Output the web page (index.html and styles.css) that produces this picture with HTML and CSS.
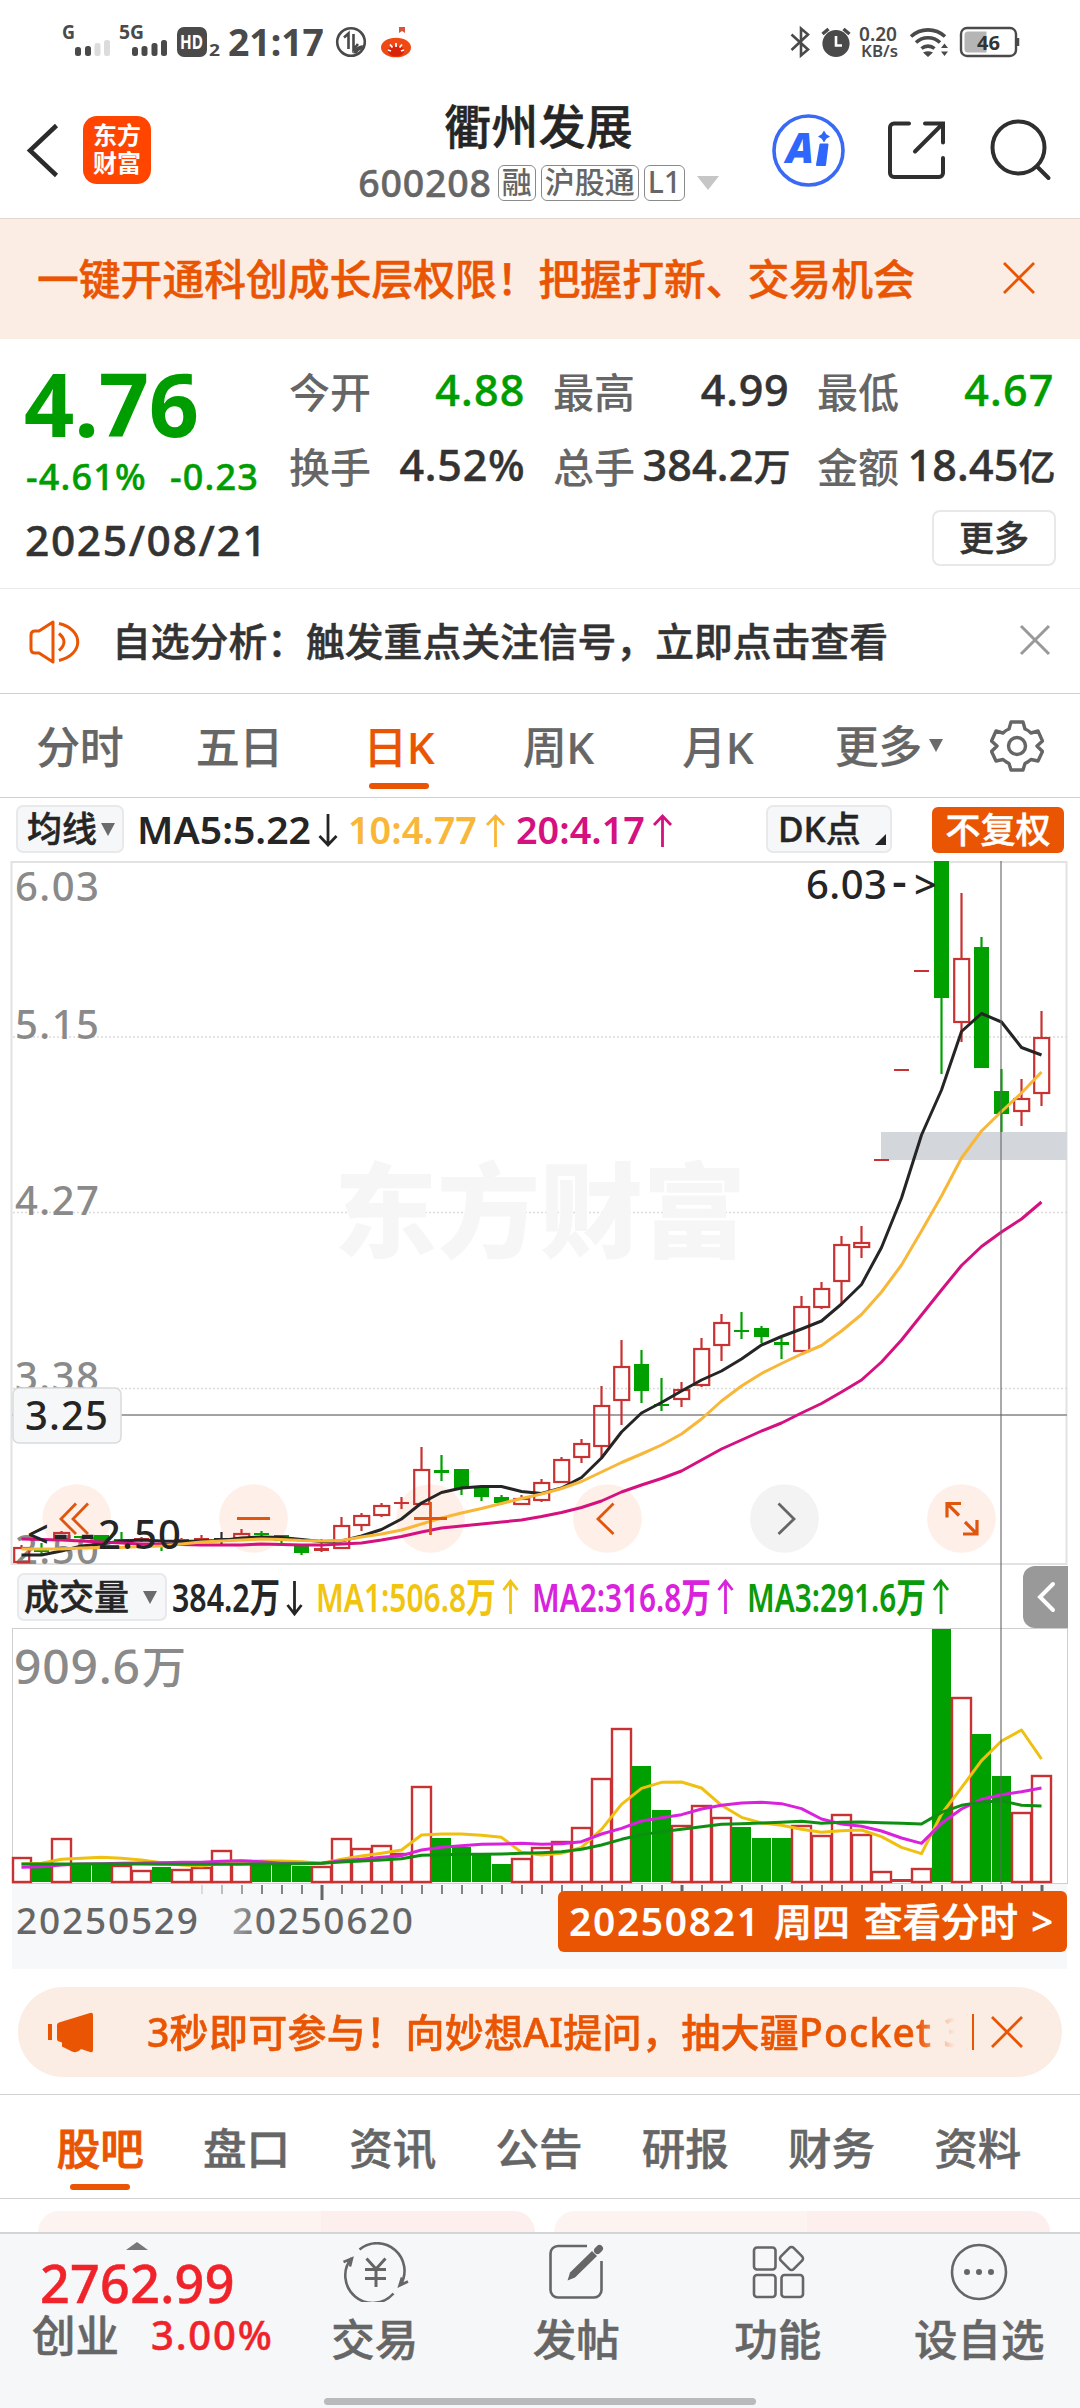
FILE: index.html
```html
<!DOCTYPE html>
<html lang="zh-CN">
<head>
<meta charset="utf-8">
<title>衢州发展 600208</title>
<link rel="stylesheet" href="styles.css">
</head>
<body>
<div class="phone">

  <div class="status">
    <svg class="status-left" width="380" height="40" viewBox="50 20 380 40">
      <g fill="#4a4a4a" class="st-text">
        <text x="62" y="39" font-size="20" textLength="13" lengthAdjust="spacingAndGlyphs">G</text>
        <rect x="75" y="47" width="6" height="9" rx="2.5"/><rect x="85" y="46" width="6" height="10" rx="2.5"/>
        <rect x="94.500" y="43" width="6" height="13" rx="2.500" fill="#dcdcdc"/><rect x="104" y="40" width="6" height="16" rx="2.500" fill="#dcdcdc"/>
        <text x="119" y="39" font-size="20" textLength="25" lengthAdjust="spacingAndGlyphs">5G</text>
        <rect x="132" y="47" width="6" height="9" rx="2.500"/><rect x="141.500" y="46" width="6" height="10" rx="2.500"/>
        <rect x="151.500" y="43" width="6" height="13" rx="2.500"/><rect x="161" y="40" width="6" height="16" rx="2.500"/>
        <rect x="177" y="27" width="30" height="30" rx="7"/>
        <text x="180" y="49" font-size="20" fill="#fff" textLength="23" lengthAdjust="spacingAndGlyphs">HD</text>
        <text x="209" y="56" font-size="16" textLength="11" lengthAdjust="spacingAndGlyphs">2</text>
        <text x="228" y="56" font-size="38" textLength="96" lengthAdjust="spacingAndGlyphs">21:17</text>
      </g>
      <g fill="none" stroke="#4a4a4a" stroke-width="2.600">
        <circle cx="351" cy="42" r="13.800"/>
        <path d="M344 37.500l4.500-4V49M353.500 34v15.500l4.500-5.500"/>
        <path d="M355 53.500c.5-4 3.500-5.500 8-6.500" stroke-width="4"/>
      </g>
      <path d="M399 27h6v6l-3-2-3 2z" fill="#d4573a"/>
      <ellipse cx="396" cy="47.500" rx="15" ry="9.800" fill="#f04a14"/>
      <ellipse cx="396" cy="51" rx="8" ry="5.500" fill="#d9230a"/>
      <path d="M388 50l3 1M390 44.500l2.500 3M396 43v4M402 44.500l-2.500 3M404 50l-3 1" stroke="#fff" stroke-width="1.800"/>
    </svg>
    <svg class="status-right" width="250" height="40" viewBox="780 20 250 40">
      <path d="M791.500 34.500L808 49.500l-7 6V28.500l7 6L791.500 50" fill="none" stroke="#4a4a4a" stroke-width="2.600"/>
      <circle cx="836" cy="43.500" r="13.600" fill="#4a4a4a"/>
      <path d="M822.500 34l6-5M849.500 34l-6-5" stroke="#4a4a4a" stroke-width="3.400"/>
      <path d="M836 36v9.500h6" fill="none" stroke="#fff" stroke-width="2.600"/>
      <g class="st-text thin" fill="#4a4a4a">
        <text x="859" y="41" font-size="19" textLength="38" lengthAdjust="spacingAndGlyphs">0.20</text>
        <text x="861" y="57" font-size="16" textLength="37" lengthAdjust="spacingAndGlyphs">KB/s</text>
      </g>
      <g fill="none" stroke="#4a4a4a" stroke-width="3.600">
        <path d="M911 36.500a25 25 0 0 1 34 0M916 42.500a17.500 17.500 0 0 1 24 0M921.500 48.500a10 10 0 0 1 13 0"/>
      </g>
      <path d="M923 52.500q5-2.500 10 0l-5 4.500zM941 48l3.500-4.500 3.500 4.500zM941 51.500h7l-3.500 4.500z" fill="#4a4a4a"/>
      <rect x="961" y="28" width="55" height="28" rx="6" fill="none" stroke="#4a4a4a" stroke-width="2.400"/>
      <path d="M968 31.500h18.500v21H968q-3.500 0-3.500-3.500V35q0-3.500 3.500-3.500z" fill="#b5b5b5"/>
      <path d="M1018 38v8" stroke="#4a4a4a" stroke-width="2.500"/>
      <text x="977" y="49.500" font-size="20" class="st-text" fill="#333" textLength="23" lengthAdjust="spacingAndGlyphs">46</text>
    </svg>
  </div>

  <header class="header">
    <svg class="back" width="40" height="60" viewBox="20 121 40 60"><path d="M56.500 126.500L30 151.500l26.500 25" fill="none" stroke="#2b2b2b" stroke-width="4.500"/></svg>
    <div class="logo"><span>东方</span><span>财富</span></div>
    <div class="title-block">
      <h1>衢州发展</h1>
      <div class="code"><span class="num">600208</span><i>融</i><i>沪股通</i><i>L1</i><b class="tri"></b></div>
    </div>
    <svg class="head-icons" width="290" height="80" viewBox="765 111 290 80">
      <circle cx="808.500" cy="151.500" r="34.500" fill="none" stroke="#3a6af5" stroke-width="3.600"/>
      <text class="ai" x="786" y="164" font-size="43" fill="#2f66fb" textLength="28" lengthAdjust="spacingAndGlyphs">A</text>
      <path d="M820.500 145.500h7l-2.500 20.500h-8z" fill="#2f66fb" stroke="#2f66fb" stroke-width="2" stroke-linejoin="round"/>
      <path d="M824 131.500l2.300 3.700 3.700 2.300-3.700 2.300-2.300 3.700-2.300-3.700-3.700-2.300 3.700-2.300z" fill="#2f66fb"/>
      <g fill="none" stroke="#2f2f2f" stroke-width="4" stroke-linecap="round">
        <path d="M909 124.500h-15a4 4 0 0 0-4 4V174a4 4 0 0 0 4 4h45a4 4 0 0 0 4-4v-15M925 124.500h18v19M942 125.500L915 152.500"/>
        <circle cx="1018.500" cy="148.500" r="26"/><path d="M1037 167.500l11.500 11.500"/>
      </g>
    </svg>
  </header>

  <div class="banner"><span>一键开通科创成长层权限！把握打新、交易机会</span>
    <svg width="34" height="34" viewBox="0 0 34 34"><path d="M2 2l30 30M32 2L2 32" stroke="#ea5504" stroke-width="2.800"/></svg>
  </div>

  <section class="quote">
    <div class="price-col">
      <div class="last">4.76</div>
      <div class="chg"><span>-4.61%</span><span>-0.23</span></div>
    </div>
    <div class="stats">
      <div><label>今开</label><span class="g">4.88</span></div>
      <div><label>最高</label><span>4.99</span></div>
      <div><label>最低</label><span class="g">4.67</span></div>
      <div><label>换手</label><span>4.52%</span></div>
      <div><label>总手</label><span>384.2<em>万</em></span></div>
      <div><label>金额</label><span>18.45<em>亿</em></span></div>
    </div>
    <div class="date-row"><span class="date">2025/08/21</span><button class="more">更多</button></div>
  </section>

  <div class="notice">
    <svg width="54" height="48" viewBox="28 616 54 48" fill="none" stroke="#ea5504" stroke-width="3">
      <path d="M53 621v40l-14-9h-4q-4 0-4-4v-14q0-4 4-4h4z" stroke-linejoin="round"/><path d="M59 632.500q10 8.500 0 17M59 622.500c25 6 25 31 0 37"/></svg>
    <span>自选分析：触发重点关注信号，立即点击查看</span>
    <svg class="nx" width="32" height="32" viewBox="0 0 32 32"><path d="M2 2l28 28M30 2L2 30" stroke="#999" stroke-width="3"/></svg>
  </div>

  <nav class="periods">
    <span>分时</span><span>五日</span><span class="on">日K</span><span>周K</span><span>月K</span>
    <span class="wide">更多<b class="tri"></b></span>
    <svg width="54" height="54" viewBox="-27 -27 54 54" fill="none" stroke="#666" stroke-width="3.400" stroke-linejoin="round">
      <path d="M-6-24H6L8-17Q11-16 14-13L21-15 25.500-5 20 0 25.500 5.500 21 15 14 13.500Q11 16 8 17.500L6 24H-6L-8 17.500Q-11 16-14 13.500L-21 15-25.500 5.500-20 0-25.500-5-21-15-14-13Q-11-16-8-17z"/><circle r="8.500"/></svg>
  </nav>

  <div class="ma-row">
    <button class="pill avg">均线<b class="tri"></b></button>
    <svg width="600" height="50" viewBox="130 806 600 50" class="legend">
      <text x="137" y="844" font-size="37" fill="#252525" textLength="174" lengthAdjust="spacingAndGlyphs">MA5:5.22</text>
      <text x="348" y="844" font-size="37" fill="#f8b739" textLength="129" lengthAdjust="spacingAndGlyphs">10:4.77</text>
      <text x="516" y="844" font-size="37" fill="#d4117f" textLength="129" lengthAdjust="spacingAndGlyphs">20:4.17</text>
      <g fill="none" stroke-width="2.800"><path stroke="#252525" d="M328 814v31M319.500 836l8.500 9 8.500-9"/>
      <path stroke="#f8b739" d="M495.500 847v-31M487 825l8.500-9 8.500 9"/><path stroke="#d4117f" d="M662.500 847v-31M654 825l8.500-9 8.500 9"/></g>
    </svg>
    <button class="pill dk">DK点<b class="corner"></b></button>
    <button class="adj">不复权</button>
  </div>

  <section class="charts">
    <svg id="price" class="chart-svg" width="1080" height="704" viewBox="0 861 1080 704"></svg>
    <div class="vol-row">
      <button class="pill vol">成交量<b class="tri"></b></button>
      <svg width="800" height="50" viewBox="167 1572 800 50" class="legend">
        <text x="172" y="1612" font-size="40" fill="#252525" textLength="108" lengthAdjust="spacingAndGlyphs">384.2万</text>
        <text x="316" y="1612" font-size="40" fill="#f1c40f" textLength="180" lengthAdjust="spacingAndGlyphs">MA1:506.8万</text>
        <text x="532" y="1612" font-size="40" fill="#d822dc" textLength="179" lengthAdjust="spacingAndGlyphs">MA2:316.8万</text>
        <text x="747" y="1612" font-size="40" fill="#0a9a0a" textLength="179" lengthAdjust="spacingAndGlyphs">MA3:291.6万</text>
        <g fill="none" stroke-width="2.800"><path stroke="#252525" d="M294.500 1581v33M287.500 1605l7 9 7-9"/>
        <path stroke="#f1c40f" d="M510.500 1614v-33M503.500 1590l7-9 7 9"/><path stroke="#d822dc" d="M725.500 1614v-33M718.500 1590l7-9 7 9"/><path stroke="#0a9a0a" d="M941 1614v-33M934 1590l7-9 7 9"/></g>
      </svg>
      <div class="fold"><svg width="20" height="32" viewBox="0 0 20 32"><path d="M17 3L4 16l13 13" fill="none" stroke="#fff" stroke-width="4" stroke-linecap="round"/></svg></div>
    </div>
    <svg id="volume" class="chart-svg" width="1080" height="256" viewBox="0 1628 1080 256"></svg>
    <div class="axis">
      <svg id="ticks" class="chart-svg" width="1055" height="85" viewBox="12 1884 1055 85"></svg>
      <button class="minute">
        <svg width="509" height="61" viewBox="558 1891 509 61" class="legend">
          <text x="569" y="1936" font-size="39" fill="#fff" textLength="190">20250821</text>
          <text x="774" y="1936" font-size="38" fill="#fff" textLength="76" class="cjk">周四</text>
          <text x="864" y="1936" font-size="38.500" fill="#fff" textLength="154" class="cjk">查看分时</text>
          <text x="1031" y="1936" font-size="39" fill="#fff">&gt;</text>
        </svg>
      </button>
    </div>
    <div class="cross-v"></div>
  </section>

  <div class="promo">
    <svg width="46" height="42" viewBox="47 2011 46 42" fill="#ea5504"><path d="M48 2024h4v16h-4zM57 2025q0-2 2-2.500l31-9.500q3-1 3 2v35q0 3-3 2l-9-3q-4 5-9 2.500l-10-5v-4l-3-1q-2-.5-2-2.500z"/></svg>
    <div class="promo-text">3秒即可参与！向妙想AI提问，抽大疆<b>Pocket 3</b></div>
    <i></i>
    <svg width="34" height="34" viewBox="0 0 34 34"><path d="M2 2l30 30M32 2L2 32" stroke="#ea5504" stroke-width="2.800"/></svg>
  </div>

  <nav class="subtabs">
    <span class="on">股吧</span><span>盘口</span><span>资讯</span><span>公告</span><span>研报</span><span>财务</span><span>资料</span>
  </nav>

  <div class="cards"><div></div><div></div></div>

  <footer class="bottom">
    <div class="index">
      <b class="up"></b>
      <div class="idx">2762.99</div>
      <div class="idx-row"><span>创业</span><span class="r">3.00%</span></div>
    </div>
    <div class="item">
      <svg width="70" height="60" viewBox="340 2242 70 60" fill="none" stroke="#666" stroke-width="2.600"><path d="M359.500 2249.500a27.500 27.500 0 0 1 41 35.500M393.500 2293.500a27.500 27.500 0 0 1-42-35.500M343.500 2262l8.500-3.500-2 8M408 2281.500l-8.500 4 2.500-8"/><path d="M366.500 2258.500l9.500 10.500 9.500-10.500M365 2269.500h21M365 2278.500h21M376 2269v18" stroke-width="3"/></svg>
      <span>交易</span></div>
    <div class="item">
      <svg width="60" height="60" viewBox="547 2242 60 60" fill="none" stroke="#666" stroke-width="2.600"><path d="M588 2246h-29a7.500 7.500 0 0 0-7.500 7.500V2290a7.500 7.500 0 0 0 7.500 7.500h36a7.500 7.500 0 0 0 7.500-7.500v-29"/><path d="M568.500 2280.500l2.500-8 22-21.500 5 5-22 21.500z" fill="#666" stroke="none"/><path d="M598.500 2250.500l2-2" stroke-width="7" stroke-linecap="round"/></svg>
      <span>发帖</span></div>
    <div class="item">
      <svg width="60" height="60" viewBox="748 2242 60 60" fill="none" stroke="#666" stroke-width="2.600"><rect x="754" y="2247.500" width="21.500" height="22" rx="3"/><rect x="754" y="2275" width="21.500" height="22" rx="3"/><rect x="781.500" y="2275" width="21.500" height="22" rx="3"/><rect x="782.500" y="2249.500" width="18" height="18" rx="3" transform="rotate(45 791.500 2258.500)"/></svg>
      <span>功能</span></div>
    <div class="item">
      <svg width="60" height="60" viewBox="949 2242 60 60" fill="none" stroke="#666" stroke-width="2.600"><circle cx="979" cy="2272" r="27"/><g fill="#666" stroke="none"><circle cx="967" cy="2272" r="3"/><circle cx="979" cy="2272" r="3"/><circle cx="991" cy="2272" r="3"/></g></svg>
      <span>设自选</span></div>
    <div class="home"></div>
  </footer>
</div>
<script src="chart.js"></script>
</body>
</html>
```
FILE: styles.css
```css
* { box-sizing: border-box; }
body { margin: 0; background: #fff; font-family: "Noto Sans", "Noto Sans CJK SC", sans-serif; font-weight: 500; color: #252525; -webkit-text-stroke: .5px; }
svg { display: block; flex: none; }
svg text { -webkit-text-stroke: 0; }
button { font: inherit; border: 0; padding: 0; color: inherit; }
i, em { font-style: normal; }
h1 { margin: 0; font-weight: 500; }
.phone { width: 1080px; height: 2408px; overflow: hidden; display: flex; flex-direction: column; }
.phone > * { flex: none; }
.tri { display: block; width: 0; height: 0; border: 7px solid transparent; border-bottom: 0; border-top: 13px solid #6b6b6b; }

.status { height: 82px; padding: 20px 50px 0; display: flex; justify-content: space-between; }
.st-text { font-family: "Noto Sans", sans-serif; font-weight: 700; }
.thin { font-weight: 600; }

.header { height: 137px; border-bottom: 1px solid #e3d6cf; display: flex; align-items: center; padding: 0 25px 0 20px; }
.logo { width: 68px; height: 68px; margin-left: 23px; border-radius: 14px; background: #ff4500; color: #fff; font-size: 24px; line-height: 28px; font-weight: 700; text-align: center; padding-top: 5px; -webkit-text-stroke: 0; }
.logo span { display: block; }
.title-block { flex: 1; display: flex; flex-direction: column; align-items: center; padding-left: 161px; margin-top: 2px; }
h1 { font-size: 47px; line-height: 56px; letter-spacing: .2px; margin-top: -2px; }
.code { display: flex; align-items: center; color: #666; height: 38px; margin-top: 10px; }
.code .num { font-size: 37.500px; letter-spacing: .8px; line-height: 36px; margin-right: 6px; }
.code i { border: 1px solid #8a8a8a; border-radius: 6px; font-size: 30px; height: 36px; line-height: 32px; padding: 0 3px; margin-right: 5px; -webkit-text-stroke: 0; }
.code .tri { border-width: 14px 11px 0; border-top-color: #c6c6c6; margin-left: 7px; }
.ai { font-family: "Noto Sans", sans-serif; font-weight: 900; font-style: italic; }

.banner { height: 120px; background: #fbede4; color: #ea5504; font-size: 41.800px; display: flex; align-items: center; justify-content: space-between; padding: 0 44px 0 37px; }
.banner svg { margin-top: -2px; }
.banner span { line-height: 60px; }

.quote { height: 250px; border-bottom: 1px solid #e9e9e9; padding: 20px 24px 0 25px; display: grid; grid-template-columns: 264px 1fr; grid-template-rows: 148px 62px; color: #333; }
.last { font-size: 88px; line-height: 90px; font-weight: 700; color: #009d00; letter-spacing: -.2px; margin-left: -1px; margin-top: -1px; -webkit-text-stroke: 0; }
.chg { color: #009d00; font-size: 36px; line-height: 44px; display: flex; gap: 23px; margin-top: 7px; white-space: nowrap; letter-spacing: 1.200px; margin-left: 1px; }
.stats { display: grid; grid-template-columns: 236px 236px 237px; column-gap: 28px; grid-template-rows: 75px 75px; margin-top: -7px; }
.stats div { display: flex; justify-content: space-between; align-items: center; white-space: nowrap; }
.stats label { font-size: 41px; color: #666; -webkit-text-stroke: 0; }
.stats span { font-size: 43px; letter-spacing: .8px; margin-right: -.5px; }
.stats .g { color: #009d00; letter-spacing: 1.200px; }
.stats em { font-size: 37px; letter-spacing: -1px; }
.stats div:nth-child(n+5) span { letter-spacing: .2px; }
.date-row { grid-column: 1 / 3; display: flex; justify-content: space-between; align-items: center; }
.date { font-size: 42.500px; letter-spacing: 1.600px; margin-top: 2px; }
.more { width: 124px; height: 56px; border: 2px solid #e8e8e8; border-radius: 8px; background: #fff; font-size: 35px; line-height: 50px; }

.notice { height: 105px; border-bottom: 1px solid #d2d2d2; padding: 0 29px 0 28px; display: flex; align-items: center; font-size: 38.800px; color: #333; }
.notice span { margin-left: 30px; flex: 1; white-space: nowrap; margin-top: -4px; }
.nx { margin-top: -2px; }

.periods { height: 104px; border-bottom: 1px solid #d2d2d2; display: flex; padding-right: 36px; color: #666; font-size: 44px; align-items: center; }
.periods span { width: 159.500px; height: 103px; text-align: center; line-height: 106px; display: flex; justify-content: center; position: relative; -webkit-text-stroke: .2px; letter-spacing: -.4px; }
.periods .wide { align-items: center; gap: 7px; flex: 1; padding-right: 10px; }
.on { color: #ea5504; }
.on::after { content: ""; position: absolute; left: 50%; bottom: 8px; width: 60px; height: 6px; border-radius: 3px; margin-left: -30px; background: #ea5504; }

.pill { background: #f6f7f9; border: 2px solid #e8e9eb; border-radius: 7px; height: 48px; display: flex; align-items: center; font-size: 35px; line-height: 42px; position: relative; }
.ma-row { height: 63px; padding: 7px 16px 0; display: flex; }
.avg { width: 108px; padding-left: 9px; gap: 4px; }
.ma-row .legend { margin-left: 6px; margin-top: 1px; }
.dk { width: 126px; padding-left: 10px; margin-left: 36px; }
.corner { position: absolute; right: 4px; bottom: 6px; border-left: 11px solid transparent; border-bottom: 11px solid #252525; }
.adj { width: 132px; height: 46px; margin-left: auto; margin-top: 2px; border-radius: 6px; background: #ea5504; color: #fff; font-size: 35px; line-height: 44px; }

.charts { position: relative; }
.chart-svg text, .legend text { font-family: "Noto Sans", "Noto Sans CJK SC", sans-serif; font-weight: 600; }
.chart-svg text { font-weight: 550; }
.legend .cjk { font-weight: 500; stroke: #fff; stroke-width: .6px; }
.vol-row { height: 63px; padding: 8px 12px 0 17px; display: flex; }
.vol { width: 150px; padding-left: 5px; gap: 14px; }
.vol-row .legend { margin-top: -1px; }
.fold { width: 45px; height: 62px; margin: -7px 0 0 auto; background: #999; border-radius: 12px 0 0 12px; display: flex; align-items: center; justify-content: center; }
.axis { height: 85px; margin: 0 13px 0 12px; background: #f7f8fa; position: relative; }
.minute { position: absolute; right: 0; top: 7px; width: 509px; height: 61px; border-radius: 6px; background: #ea5504; }
.cross-v { position: absolute; left: 1000px; top: 0; width: 2px; height: 1023px; background: rgba(100, 100, 100, .55); }

.promo { height: 90px; margin: 18px 18px 17px; border-radius: 45px; background: #fbede4; color: #ea5504; display: flex; align-items: center; padding: 0 38px 0 29px; font-size: 39px; }
.promo-text { width: 812px; margin-left: 54px; margin-top: -4px; overflow: hidden; white-space: nowrap; letter-spacing: .3px; -webkit-mask-image: linear-gradient(90deg, #000 95%, transparent 99.5%); mask-image: linear-gradient(90deg, #000 95%, transparent 99.5%); }
.promo-text b { font-weight: inherit; letter-spacing: 1.200px; }
.promo i { width: 2px; height: 36px; background: #ea5504; margin: 0 16px 0 13px; }

.subtabs { height: 105px; border-top: 1px solid #d2d2d2; border-bottom: 1px solid #d2d2d2; padding: 0 29px 0 27px; display: flex; font-size: 43.500px; color: #666; }
.subtabs span { flex: 1; text-align: center; line-height: 106px; position: relative; }
.subtabs .on { color: #ea5504; -webkit-text-stroke: .9px; }

.cards { height: 33px; padding: 12px 30px 0 38px; display: flex; gap: 19px; overflow: hidden; }
.cards div { flex: 1; border-radius: 22px 22px 0 0; background: linear-gradient(90deg, #fdf4f2 57%, #fcefed 57%); }
.cards div + div { background: linear-gradient(90deg, #fdf4f2 51%, #fcefed 51%); }

.bottom { height: 176px; border-top: 2px solid #d4d5d7; background: #f6f7f9; display: grid; grid-template-columns: 274px repeat(4, 201.500px); position: relative; color: #666; font-size: 43.500px; }
.index { padding: 8px 0 0 32px; }
.up { display: block; width: 0; height: 0; border: 11px solid transparent; border-top: 0; border-bottom: 8px solid #777; margin-left: 94px; }
.idx { color: #f0232b; font-size: 52px; line-height: 60px; margin: 3px 0 0 8px; letter-spacing: .3px; }
.idx-row { display: flex; align-items: center; line-height: 50px; gap: 32px; margin-top: -3px; white-space: nowrap; }
.r { color: #f0232b; font-size: 40px; letter-spacing: 1.800px; }
.item { display: flex; flex-direction: column; align-items: center; padding-top: 8px; }
.item span { line-height: 60px; margin-top: 7px; }
.home { position: absolute; left: 324px; bottom: 3px; width: 432px; height: 7px; border-radius: 4px; background: #b9babc; }
```
FILE: chart.js
```js
const RED = '#c83232', GREEN = '#00a000';
const X0 = 21.5, STEP = 20;
const cx = i => X0 + STEP * i;

// [kind, bodyTop, bodyBottom, wickTop, wickBottom]
const candles = [
  ['r',1547,1563,1545,1563],['g',1550,1552,1543,1554],['r',1532,1540,1531,1541],['g',1536,1538,1536,1538],
  ['g',1535,1542,1535,1542],['g',1539,1541,1532,1542],['r',1538,1540,1537,1542],['g',1544,1546,1544,1551],
  ['r',1539,1542,1538,1543],['r',1538,1541,1535,1543],['k',1538,1540,1532,1544],['r',1533,1539,1529,1539],
  ['g',1533,1535,1531,1537],['g',1535,1541,1535,1546],['g',1545,1553,1545,1555],['r',1548,1551,1539,1552],
  ['r',1525,1549,1517,1549],['r',1515,1526,1513,1531],['r',1505,1516,1503,1517],['r',1502,1504,1497,1509],
  ['r',1469,1505,1447,1505],['g',1470,1473,1455,1481],['g',1469,1488,1469,1495],['g',1487,1497,1487,1501],
  ['g',1497,1503,1495,1505],['r',1498,1505,1495,1505],['r',1482,1501,1479,1502],['r',1459,1483,1457,1483],
  ['r',1443,1458,1439,1463],['r',1405,1447,1386,1457],['r',1366,1401,1340,1425],['g',1364,1391,1350,1403],
  ['g',1404,1406,1378,1411],['r',1389,1400,1382,1407],['r',1348,1386,1338,1387],['r',1322,1346,1314,1361],
  ['g',1330,1332,1312,1339],['g',1328,1337,1326,1343],['g',1342,1345,1338,1359],['r',1306,1352,1296,1352],
  ['r',1288,1308,1282,1309],['r',1244,1282,1236,1303],['r',1242,1248,1226,1258],['r',1159,1161,1159,1161],
  ['r',1069,1071,1069,1071],['r',970,972,970,972],['g',861,998,861,1074],['r',958,1023,893,1042],
  ['g',947,1068,937,1068],['g',1091,1114,1069,1132],['r',1098,1112,1079,1126],['r',1037,1094,1011,1106]
];
const ma5 = [1555,1555,1551,1546,1544,1541,1540,1541,1541.5,1541,1540.5,1538,1537,1537.5,1539.5,1541.5,1541,1536,1529.5,1519,1503,1492.5,1488,1486.5,1486.5,1491.5,1493.5,1488,1477.5,1458,1432,1413,1402.5,1391,1380,1371,1359,1345,1336.5,1329,1321,1304,1284.5,1247.5,1198,1135,1090,1031.5,1013.5,1022,1047.5,1055];
const ma10 = [1549,1549,1549,1548,1547.5,1547.5,1546.5,1546,1544,1542,1541,1540,1539,1539.5,1540.5,1541,1540.5,1537,1534,1530,1524,1518,1513,1508.5,1503.5,1498.5,1494,1488.5,1481.5,1472,1462.5,1454,1445,1434,1419,1401,1386,1373.5,1363.5,1354,1345.5,1331,1314.5,1292,1265,1231,1196,1158,1131,1111.5,1093,1072];
const ma20 = [1539,1539.5,1540,1541,1542,1543,1544,1544,1544.5,1545,1545,1545,1544,1544.5,1545,1545,1544,1543,1540,1536.5,1532,1528,1526,1524,1522,1520,1516.5,1512.5,1507.5,1501,1492,1485,1478.5,1471,1460,1449,1440,1431,1423,1413,1403.5,1392,1380,1362,1340,1315,1290,1265.5,1246.5,1232,1219,1202];

const el = [];
const line = (x1, y1, x2, y2, s, w = 2.2, extra = '') =>
  `<path d="M${x1} ${y1}L${x2} ${y2}" stroke="${s}" stroke-width="${w}" ${extra}/>`;
const poly = (ys, s, w = 3) =>
  `<polyline points="${ys.map((y, i) => cx(i) + ',' + y).join(' ')}" fill="none" stroke="${s}" stroke-width="${w}" stroke-linejoin="round"/>`;
const label = (x, y, t, len, size, fill) =>
  `<text x="${x}" y="${y}" font-size="${size}" fill="${fill}" textLength="${len}">${t}</text>`;

// price panel
el.push(`<rect x="11.500" y="862" width="1055" height="702" fill="#fff" stroke="#e2e2e2" stroke-width="2"/>`);
[1037, 1212.5, 1388.5].forEach(y => el.push(line(13, y, 1067, y, '#dcdcdc', 1.3, 'stroke-dasharray="2 2"')));
el.push(`<text x="334" y="1250" font-size="103" fill="#f6f6f6" style="font-weight:900" textLength="412">东方财富</text>`);
el.push(`<rect x="881" y="1132" width="186" height="28" fill="#d3d7dc"/>`);
[76.7, 253.5, 430.5, 607.5, 784.5, 961.5].forEach((x, i) =>
  el.push(`<circle cx="${x}" cy="1518.500" r="34.300" fill="${i === 4 ? '#f3f3f3' : '#fef0e8'}"/>`));
[['6.03', 901], ['5.15', 1039], ['4.27', 1214.5], ['3.38', 1390.5], ['2.50', 1563.5]].forEach(([t, y]) =>
  el.push(label(15, y, t, 84, 40, '#8a8a8a')));
el.push(line(12, 1415, 1067, 1415, '#a3a3a3', 1.8));
candles.forEach(([k, t, b, wt, wb], i) => {
  const x = cx(i);
  const c = k === 'r' ? RED : k === 'g' ? GREEN : '#2a2a2a';
  if (wt < t) el.push(line(x, wt, x, t, c));
  if (wb > b) el.push(line(x, b, x, wb, c));
  if (k === 'r' && b - t > 3) el.push(`<rect x="${x - 7.3}" y="${t + 1}" width="15" height="${b - t - 2}" fill="none" stroke="${c}" stroke-width="2.200"/>`);
  else el.push(`<rect x="${x - 7.5}" y="${t}" width="15" height="${b - t}" fill="${c}"/>`);
});
el.push(poly(ma5, '#252525'), poly(ma20, '#d4117f'), poly(ma10, '#f8b739'));
el.push(label(806, 899, '6.03', 81, 40, '#252525'), label(892, 897, '-', 18, 46, '#252525'), label(914, 899, '&gt;', 23, 40, '#252525'));
el.push(label(27, 1548, '&lt;', 22, 38, '#252525'), label(53, 1549, '--', 42, 46, '#252525'), label(98, 1549, '2.50', 83, 40, '#252525'));
el.push(`<rect x="13" y="1388" width="108" height="55" rx="6" fill="#f6f7f9" stroke="#d9dadc" stroke-width="1.500"/>`);
el.push(label(25, 1430, '3.25', 83, 40, '#252525'));
el.push(`<g fill="none" stroke="#e0560f" stroke-width="2.800">
<path d="M76 1503.500L61 1519l15 15M88 1503.500L73 1519l15 15"/><path d="M237 1518.500h33M414 1518.500h33M430.500 1502v33"/>
<path d="M613.500 1503.500L598 1519l15.500 15"/><path d="M778.500 1503.500L794 1519l-15.500 15" stroke="#666"/>
<path d="M961 1503.500h-14v14M947 1503.500l12 12M963 1534h14v-14M977 1534l-12-12" stroke-width="3.200"/></g>`);
document.getElementById('price').innerHTML = el.join('');

// volume panel: top of every bar
const volTop = [1857,1864,1838,1863,1863,1865,1870,1867,1869,1867,1850,1860,1863,1865,1866,1866,1838,1848,1845,1853,1786,1838,1847,1853,1864,1858,1847,1841,1827,1778,1728,1766,1810,1825,1805,1817,1827,1838,1838,1825,1835,1814,1834,1871,1879,1868,1629,1697,1734,1776,1812,1775];
const volRed = 'rgrggrrgrrrrgggrrrrrrggggrrrrrrggrrrgggrrrrrrrgrggrr';
const off = a => a.map(v => v / 3 + 1560);
const v5 = off([912,910,898,895,892,895,900,908,915,918,910,905,903,903,905,910,898,888,880,870,825,822,822,826,832,877,885,880,862,808,733,685,667,666,684,736,772,789,796,808,817,812,810,830,862,881,762,683,602,543,510,597]);
const v10 = off([922,920,915,912,911,910,909,908,907,907,904,902,905,910,910,910,902,898,892,887,870,862,857,853,852,850,853,851,845,822,805,783,773,764,747,736,729,727,731,746,777,792,799,813,834,850,790,747,718,704,695,684]);
const v20 = off([912,912,912,912,912,912,912,913,913,913,913,913,912,912,911,910,906,903,900,896,886,884,883,883,882,880,878,875,868,855,838,824,815,808,800,793,791,789,787,784,790,787,786,788,790,792,757,736,727,722,736,738]);
const vo = [`<rect x="12.500" y="1628.500" width="1055" height="255" fill="#fff" stroke="#cfcfcf"/>`];
vo.push(`<text x="14" y="1684" font-size="48" fill="#8a8a8a" textLength="126">909.6</text><text x="142" y="1684" font-size="44" fill="#8a8a8a" style="font-weight:500">万</text>`);
volTop.forEach((t, i) => {
  const x = cx(i);
  if (volRed[i] === 'g') vo.push(`<rect x="${x - 9.5}" y="${t}" width="19" height="${1882 - t}" fill="${GREEN}"/>`);
  else if (t > 1878) vo.push(`<rect x="${x - 9.5}" y="${t}" width="19" height="${1882 - t}" fill="${RED}"/>`);
  else {
    const l = Math.max(x - 9.5, 13);
    vo.push(`<rect x="${l}" y="${t + 1}" width="${x + 9.5 - l}" height="${1881 - t}" fill="none" stroke="${RED}" stroke-width="2.400"/>`);
  }
});
vo.push(poly(v5, '#efc010'), poly(v10, '#d822dc'), poly(v20, '#0f8f12'));
document.getElementById('volume').innerHTML = vo.join('');

// date axis
const tk = [];
for (let i = 9; i < 52; i++) {
  const major = i % 18 === 15;
  tk.push(line(cx(i) + .5, 1885, cx(i) + .5, major ? 1900 : 1894, '#666', major ? 3 : 1.6, `opacity="${Math.min(1, (i - 8) / 4)}"`));
}
tk.push('<defs><linearGradient id="fade" gradientUnits="userSpaceOnUse" x1="215" x2="262" y1="0" y2="0"><stop offset="0" stop-color="#ccc"/><stop offset="1" stop-color="#666"/></linearGradient></defs>');
tk.push(label(16, 1934, '20250529', 182, 37, '#666'), label(232, 1934, '20250620', 181, 37, 'url(#fade)'));
document.getElementById('ticks').innerHTML = tk.join('');
```
